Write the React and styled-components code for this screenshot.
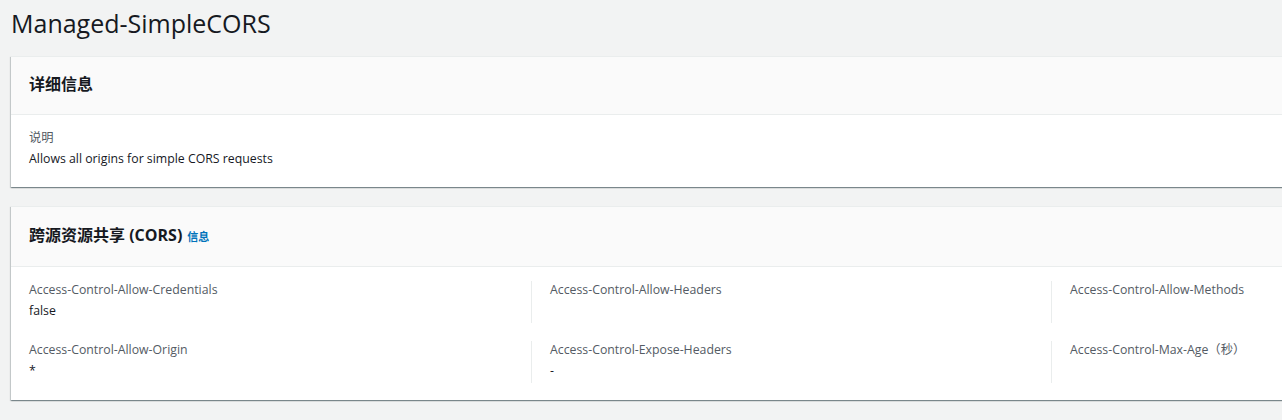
import React from "react";
import styled, { createGlobalStyle } from "styled-components";

const GlobalStyle = createGlobalStyle`
  html, body {
    margin: 0;
    padding: 0;
    background: #f2f3f3;
    overflow: hidden;
  }
  body {
    font-family: "Open Sans", "Noto Sans CJK SC", sans-serif;
    color: #16191f;
  }
`;

const CORS_FIELDS = [
  { id: 1, label: "Access-Control-Allow-Credentials", value: "false" },
  { id: 2, label: "Access-Control-Allow-Headers", value: "" },
  { id: 3, label: "Access-Control-Allow-Methods", value: "" },
  { id: 4, label: "Access-Control-Allow-Origin", value: "*" },
  { id: 5, label: "Access-Control-Expose-Headers", value: "-" },
  { id: 6, label: "Access-Control-Max-Age（秒）", value: "" },
];

const App = () => {
  return (
    <Page>
      <GlobalStyle />
      <Title>Managed-SimpleCORS</Title>
      <Card>
        <CardHeader>
          <h2>详细信息</h2>
        </CardHeader>
        <CardBody>
          <Label>说明</Label>
          <Value>Allows all origins for simple CORS requests</Value>
        </CardBody>
      </Card>
      <Card>
        <CardHeader $withInfo>
          <h2>跨源资源共享 (CORS)</h2>
          <InfoLink>信息</InfoLink>
        </CardHeader>
        <GridBody>
          <FieldGrid>
            {CORS_FIELDS.map((field, i) => (
              <Field key={field.id} $divided={i % 3 !== 0}>
                <Label>{field.label}</Label>
                <Value>{field.value}</Value>
              </Field>
            ))}
          </FieldGrid>
        </GridBody>
      </Card>
    </Page>
  );
};

const Page = styled.div`
  width: 1600px;
  padding: 6px 0 20px 11px;
`;

const Title = styled.h1`
  margin: 0 0 16px 0;
  font-size: 25px;
  font-weight: 400;
  line-height: 34px;
  color: #16191f;
`;

const Card = styled.section`
  margin-bottom: 19px;
  background: #ffffff;
  box-shadow: 0 1px 1px 0 rgba(0, 28, 36, 0.3), 1px 1px 1px 0 rgba(0, 28, 36, 0.15),
    -1px 1px 1px 0 rgba(0, 28, 36, 0.15);
  border-top: 1px solid #eaeded;
`;

const CardHeader = styled.div`
  display: flex;
  align-items: baseline;
  gap: 5px;
  padding: ${(props) => (props.$withInfo ? "16px 18px 19px" : "15px 18px 18px")};
  background: #fafafa;
  border-bottom: 1px solid #eaeded;

  h2 {
    margin: 0;
    font-size: 16px;
    font-weight: 700;
    line-height: 24px;
  }
`;

const InfoLink = styled.a`
  font-size: 11px;
  font-weight: 700;
  color: #0073bb;
  cursor: pointer;
`;

const CardBody = styled.div`
  padding: 14px 18px 18px 18px;
`;

const GridBody = styled.div`
  padding: 14px 0 17px 0;
`;

const FieldGrid = styled.div`
  display: grid;
  grid-template-columns: repeat(3, 520px);
  row-gap: 18px;
`;

const Field = styled.div`
  padding: 0 18px 2px 18px;
  border-left: ${(props) => (props.$divided ? "1px solid #eaeded" : "none")};
`;

const Label = styled.div`
  font-size: 12.3px;
  line-height: 18px;
  color: #545b64;
`;

const Value = styled.div`
  margin-top: 2px;
  font-size: 12.3px;
  line-height: 20px;
  min-height: 20px;
  color: #16191f;
`;

export default App;
